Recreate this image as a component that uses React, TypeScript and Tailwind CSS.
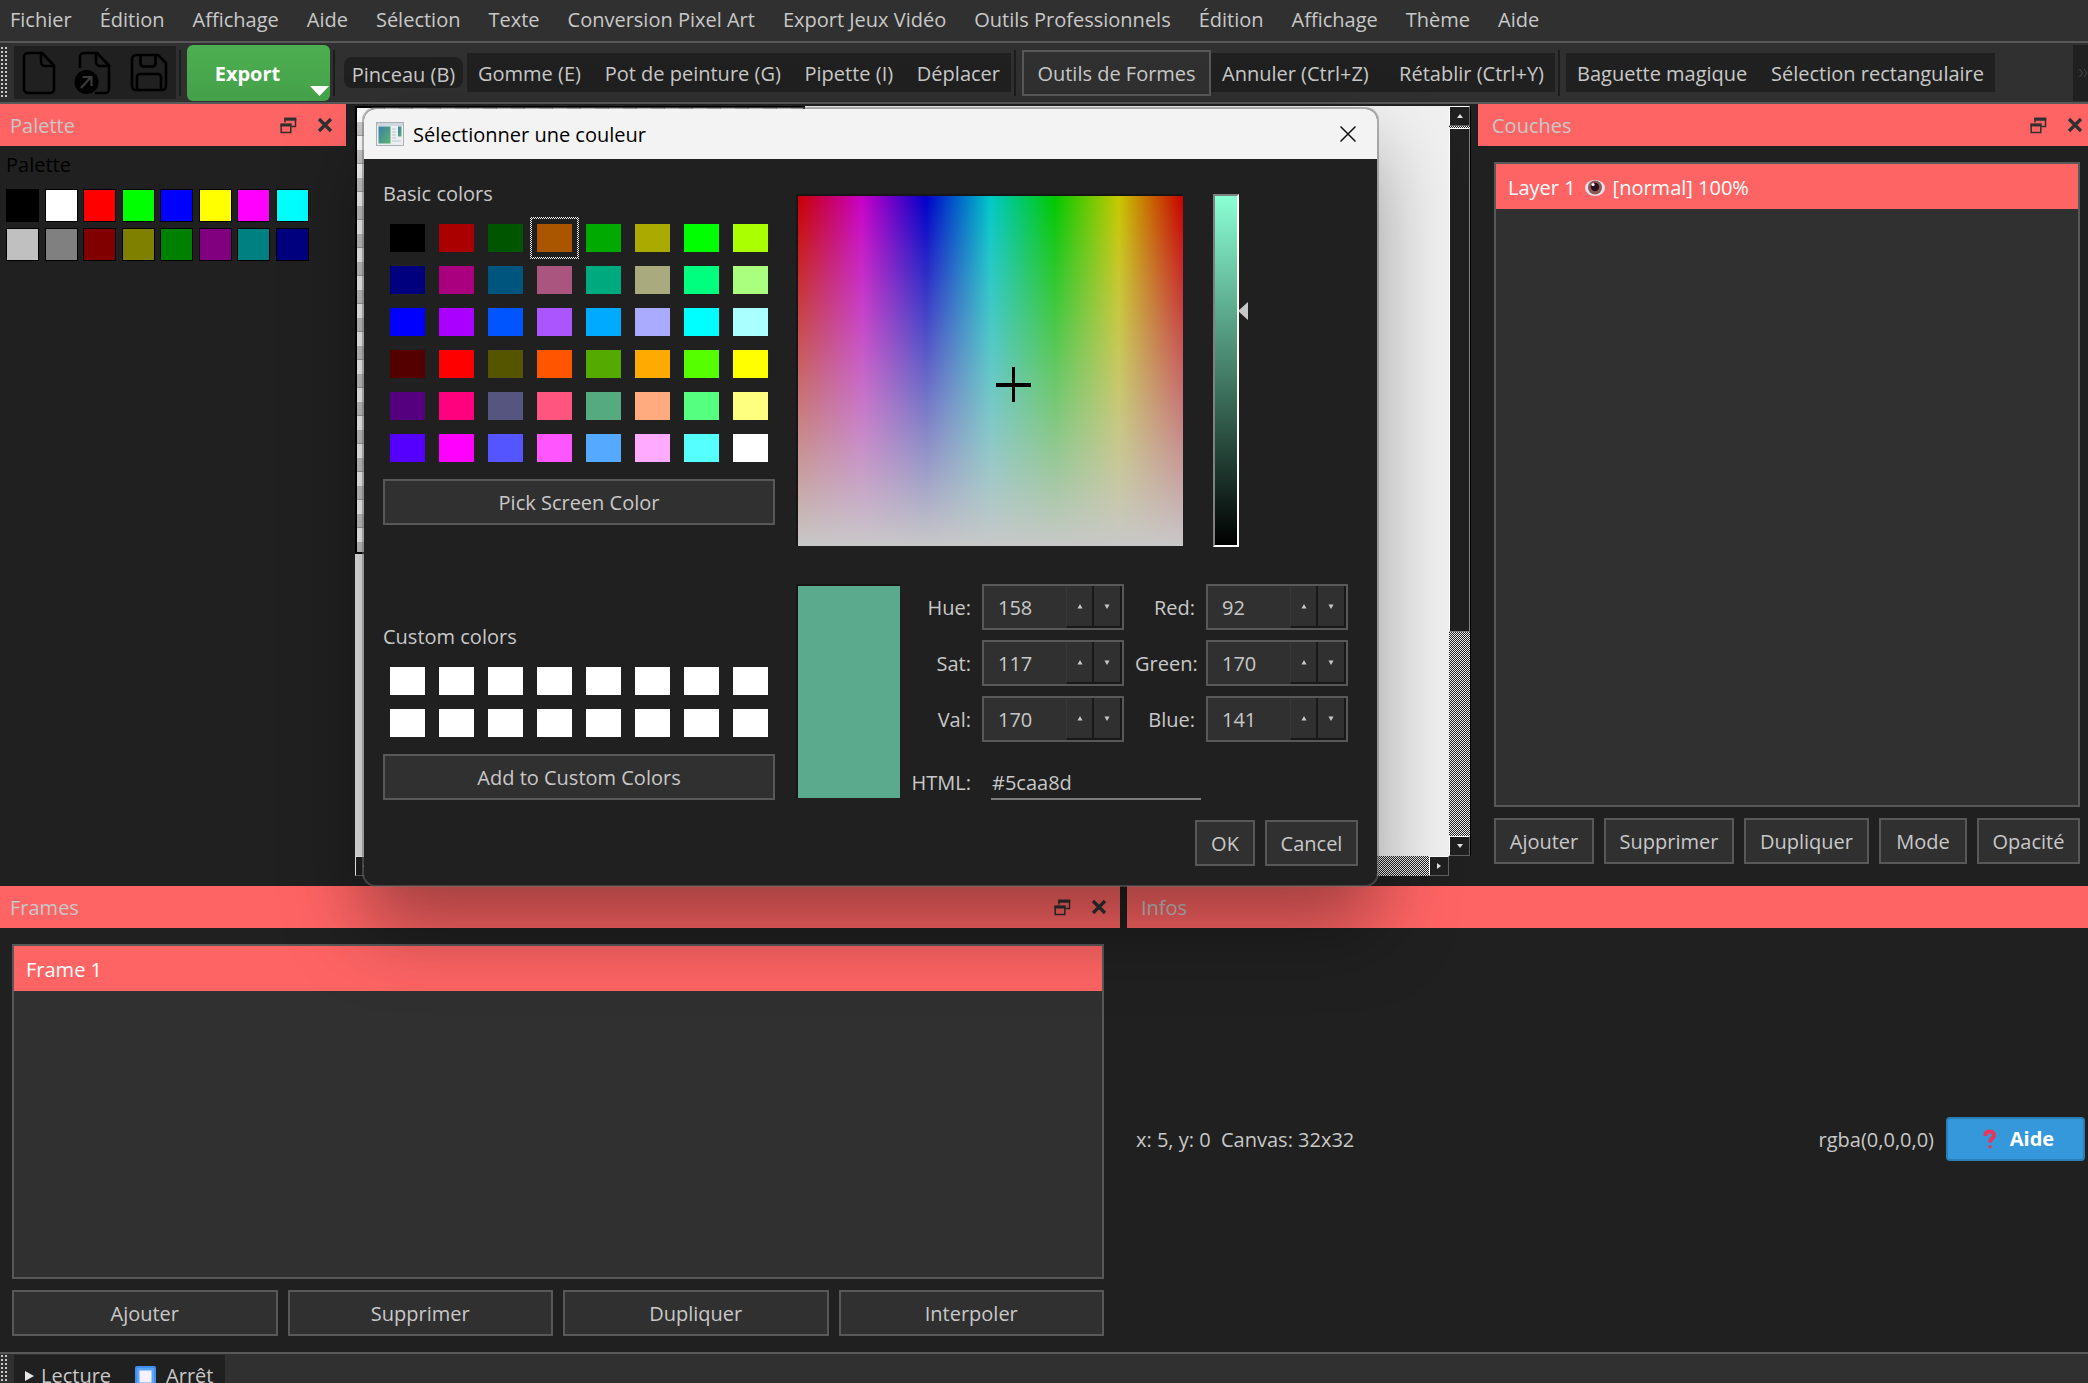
import React, { useState } from "react";

const MENUS = [
  "Fichier",
  "Édition",
  "Affichage",
  "Aide",
  "Sélection",
  "Texte",
  "Conversion Pixel Art",
  "Export Jeux Vidéo",
  "Outils Professionnels",
  "Édition",
  "Affichage",
  "Thème",
  "Aide",
];

const PALETTE = [
  "#000000", "#ffffff", "#ff0000", "#00ff00", "#0000ff", "#ffff00", "#ff00ff", "#00ffff",
  "#c0c0c0", "#808080", "#800000", "#808000", "#008000", "#800080", "#008080", "#000080",
];

const BASIC = [
  "#000000", "#aa0000", "#005500", "#aa5500", "#00aa00", "#aaaa00", "#00ff00", "#aaff00",
  "#00007f", "#aa007f", "#00557f", "#aa557f", "#00aa7f", "#aaaa7f", "#00ff7f", "#aaff7f",
  "#0000ff", "#aa00ff", "#0055ff", "#aa55ff", "#00aaff", "#aaaaff", "#00ffff", "#aaffff",
  "#550000", "#ff0000", "#555500", "#ff5500", "#55aa00", "#ffaa00", "#55ff00", "#ffff00",
  "#55007f", "#ff007f", "#55557f", "#ff557f", "#55aa7f", "#ffaa7f", "#55ff7f", "#ffff7f",
  "#5500ff", "#ff00ff", "#5555ff", "#ff55ff", "#55aaff", "#ffaaff", "#55ffff", "#ffffff",
];

const DITHER = "bg-[repeating-conic-gradient(#f0f0f0_0_25%,#202020_0_50%)] bg-[length:2px_2px]";

function FloatIcon() {
  return (
    <svg width="17" height="17" viewBox="0 0 17 17" fill="none" stroke="#303030" strokeWidth="1.5">
      <path d="M5 5.5V1.5h10.5v8h-4" />
      <path d="M4.3 2.2h11.9" strokeWidth="3" />
      <rect x="1.2" y="7.5" width="9.6" height="8" />
      <path d="M.5 8h11" strokeWidth="3" />
    </svg>
  );
}

function CrossIcon() {
  return (
    <svg width="16" height="16" viewBox="0 0 16 16" fill="none" stroke="#303030" strokeWidth="3.2">
      <path d="M2 2l12 12M14 2L2 14" />
    </svg>
  );
}

function DockTitle({
  title,
  pad = "pl-[10px] pr-[13px]",
  controls = true,
}: {
  title: string;
  pad?: string;
  controls?: boolean;
}) {
  return (
    <header className={`flex h-[42px] shrink-0 items-center bg-[#ff6464] text-[#c8c8c8] ${pad}`}>
      <h2 className="flex-1 pt-[2px]">{title}</h2>
      {controls && (
        <div className="flex items-center gap-5">
          <button type="button" aria-label={`Détacher ${title}`}>
            <FloatIcon />
          </button>
          <button type="button" aria-label={`Fermer ${title}`}>
            <CrossIcon />
          </button>
        </div>
      )}
    </header>
  );
}

function PushButton({ children, className = "" }: { children: React.ReactNode; className?: string }) {
  return (
    <button type="button" className={`h-[46px] border-2 border-[#585858] bg-[#303030] pt-[2px] text-center ${className}`}>
      {children}
    </button>
  );
}

function Handle() {
  return (
    <div className="mt-px ml-px grid h-[52px] w-[6px] shrink-0 grid-cols-2 content-start gap-[2px] overflow-hidden">
      {Array.from({ length: 26 }, (_, i) => (
        <span key={i} className="size-[2px] bg-[#c8c8c8]" />
      ))}
    </div>
  );
}

function Separator() {
  return <div className="mx-[3px] h-[46px] w-[2px] shrink-0 bg-[#1c1c1c]" />;
}

function ToolButton({ label }: { label: string }) {
  return (
    <button type="button" className="h-[39px] px-[11px] pt-[2px] whitespace-nowrap">
      {label}
    </button>
  );
}

function NewIcon() {
  return (
    <svg width="44" height="46" viewBox="0 0 44 46" fill="none" stroke="#000" strokeWidth="2.6" strokeLinejoin="round">
      <path d="M25 3H11a4 4 0 0 0-4 4v32a4 4 0 0 0 4 4h22a4 4 0 0 0 4-4V15.500Z" />
      <path d="M24 3v9a4 4 0 0 0 4 4h9" />
    </svg>
  );
}

function OpenIcon() {
  return (
    <svg width="44" height="46" viewBox="0 0 44 46" fill="none" stroke="#000" strokeWidth="2.600" strokeLinejoin="round">
      <path d="M8 18V7a4 4 0 0 1 4-4h13l12 12.500V39a4 4 0 0 1-4 4h-10" />
      <path d="M24 3v9a4 4 0 0 0 4 4h9" />
      <circle cx="14.500" cy="32" r="12" fill="#000" stroke="none" />
      <path d="M9 38l10-11M10.500 27H19.500v9" stroke="#3a3a3a" strokeWidth="2.200" />
    </svg>
  );
}

function SaveIcon() {
  return (
    <svg width="44" height="46" viewBox="0 0 44 46" fill="none" stroke="#000" strokeWidth="2.6" strokeLinejoin="round">
      <path d="M9 5h22l8 8v23a4 4 0 0 1-4 4H9a4 4 0 0 1-4-4V9a4 4 0 0 1 4-4Z" />
      <path d="M13.500 5v8.500a3 3 0 0 0 3 3h9a3 3 0 0 0 3-3V5" />
      <path d="M10 40V27a3 3 0 0 1 3-3h18a3 3 0 0 1 3 3v13" />
    </svg>
  );
}

function SpinBox({ id, label, value }: { id: string; label: string; value: number }) {
  const [v, setV] = useState(value);
  return (
    <>
      <label htmlFor={id} className="pt-[2px] text-right">
        {label}
      </label>
      <div className="flex h-[46px] w-[142px] border-2 border-[#585858] bg-[#303030]">
        <input
          id={id}
          type="number"
          value={v}
          onChange={(e) => setV(Number(e.target.value))}
          className="min-w-0 flex-1 bg-transparent pt-[2px] pl-[14px] outline-none [appearance:textfield] [&::-webkit-inner-spin-button]:appearance-none"
        />
        <button
          type="button"
          aria-label={`${label} +`}
          onClick={() => setV(v + 1)}
          className="flex w-[28px] items-center justify-center border-r-2 border-b-2 border-l border-r-[#181818] border-b-[#181818] border-l-[#383838]"
        >
          <svg width="6" height="5" viewBox="0 0 6 5" fill="#c8c8c8">
            <path d="M3 0l2.500 4.500H.5z" />
          </svg>
        </button>
        <button
          type="button"
          aria-label={`${label} -`}
          onClick={() => setV(v - 1)}
          className="flex w-[28px] items-center justify-center border-r-2 border-b-2 border-r-[#181818] border-b-[#181818]"
        >
          <svg width="6" height="5" viewBox="0 0 6 5" fill="#c8c8c8">
            <path d="M.5.5h5L3 5z" />
          </svg>
        </button>
      </div>
    </>
  );
}

function Swatches({ colors, name, current }: { colors: string[]; name: string; current?: number }) {
  return (
    <div className="grid w-[392px] auto-rows-[42px] grid-cols-8">
      {colors.map((c, i) => (
        <button
          key={i}
          type="button"
          aria-label={`${name} ${c}`}
          className={i === current ? `p-[2px] ${DITHER}` : "p-[2px]"}
        >
          <span className="flex h-full items-center justify-center bg-[#202020]">
            <span className="h-[28px] w-[35px]" style={{ backgroundColor: c }} />
          </span>
        </button>
      ))}
    </div>
  );
}

function ColorDialog() {
  const [html, setHtml] = useState("#5caa8d");
  const [val, setVal] = useState(170);
  return (
    <section
      role="dialog"
      aria-label="Sélectionner une couleur"
      className="absolute top-[109px] left-[364px] flex h-[776px] w-[1013px] flex-col overflow-hidden rounded-xl bg-[#202020] shadow-[0_0_0_2px_rgba(110,110,110,0.5),0_42px_80px_0_rgba(0,0,0,0.38)]"
    >
      <header className="flex h-[50px] shrink-0 items-center bg-[#f3f3f3] pr-[21px] pl-3 text-black">
        <svg width="28" height="24" viewBox="0 0 28 24" className="mr-[9px]">
          <defs>
            <linearGradient id="win" x1="0" y1="0" x2="1" y2="1">
              <stop offset="0" stopColor="#3a7fa8" />
              <stop offset="1" stopColor="#5db36f" />
            </linearGradient>
          </defs>
          <rect x=".5" y=".5" width="27" height="23" fill="#eceef0" stroke="#a9b0b8" />
          <rect x="1" y="1" width="26" height="3" fill="#cfd6de" />
          <rect x="2.500" y="4.500" width="12" height="17" fill="url(#win)" />
          <rect x="22" y="4.500" width="3.500" height="10" fill="url(#win)" />
          <path d="M16 7h4M16 10h4M16 13h4M16 16h4M16 19h9" stroke="#c2c6ca" />
        </svg>
        <h1 className="flex-1 pt-[2px]">Sélectionner une couleur</h1>
        <button type="button" aria-label="Fermer">
          <svg width="16" height="16" viewBox="0 0 16 16" stroke="#111" strokeWidth="1.500">
            <path d="M.5.5l15 15M15.500.5l-15 15" />
          </svg>
        </button>
      </header>

      <div className="flex flex-1 pl-[19px]">
        <div className="w-[392px]">
          <h2 className="mt-[21px] h-[28px] leading-7">Basic colors</h2>
          <div className="mt-[9px]">
            <Swatches colors={BASIC} name="Basic" current={3} />
          </div>
          <PushButton className="mt-[10px] w-full">Pick Screen Color</PushButton>
          <h2 className="mt-[98px] h-[28px] leading-7">Custom colors</h2>
          <div className="mt-[9px]">
            <Swatches colors={Array(16).fill("#ffffff")} name="Custom" />
          </div>
          <PushButton className="mt-[10px] w-full">Add to Custom Colors</PushButton>
        </div>

        <div className="ml-[21px] flex-1">
          <div className="mt-[35px] flex items-start">
            <div className="border-t-2 border-l-2 border-[#161616]">
              <div className="relative h-[350px] w-[385px] bg-[linear-gradient(to_bottom,rgba(200,200,200,0),rgb(200,200,200)),linear-gradient(to_right,#c80000,#c800c8,#0000c8,#00c8c8,#00c800,#c8c800,#c80000)]">
                <svg width="36" height="36" viewBox="0 0 36 36" stroke="#000" className="absolute top-[171px] left-[197px]">
                  <path d="M18.500 0v35" strokeWidth="3" />
                  <path d="M1 18h35" strokeWidth="4" />
                </svg>
              </div>
            </div>
            <div className="relative ml-[30px]">
              <input
                type="range"
                min="0"
                max="255"
                value={val}
                aria-label="Luminosité"
                onChange={(e) => setVal(Number(e.target.value))}
                className="block h-[353px] w-[26px] appearance-none border-2 border-t-[#808080] border-r-white border-b-white border-l-[#808080] bg-[linear-gradient(to_bottom,#8affd4,#000000)] [direction:rtl] [writing-mode:vertical-lr] [&::-webkit-slider-thumb]:appearance-none [&::-webkit-slider-thumb]:opacity-0"
              />
              <svg
                width="10"
                height="18"
                viewBox="0 0 10 18"
                fill="#c8c8c8"
                className="absolute left-[25px]"
                style={{ top: Math.round(1 + (1 - val / 255) * 349 - 9) }}
              >
                <path d="M10 0v18L0 9z" />
              </svg>
            </div>
          </div>

          <div className="mt-[37px] flex">
            <div className="h-[214px] w-[104px] border-t-2 border-l-2 border-[#161616] bg-[#5caa8d]" />
            <div>
              <div className="grid grid-cols-[71px_142px_60px_142px] items-center gap-x-[11px] gap-y-[10px]">
                <SpinBox id="hue" label="Hue:" value={158} />
                <SpinBox id="red" label="Red:" value={92} />
                <SpinBox id="sat" label="Sat:" value={117} />
                <SpinBox id="green" label="Green:" value={170} />
                <SpinBox id="val" label="Val:" value={170} />
                <SpinBox id="blue" label="Blue:" value={141} />
              </div>
              <div className="mt-[22px] flex items-center gap-5">
                <label htmlFor="html" className="w-[71px] pt-[2px] text-right">
                  HTML:
                </label>
                <input
                  id="html"
                  value={html}
                  onChange={(e) => setHtml(e.target.value)}
                  className="h-[36px] w-[210px] border-b-2 border-[#7c7c7c] bg-transparent px-px pt-[2px] outline-none"
                />
              </div>
            </div>
          </div>

          <div className="mt-5 mr-[19px] flex justify-end gap-[10px]">
            <PushButton className="w-[60px]">OK</PushButton>
            <PushButton className="w-[93px]">Cancel</PushButton>
          </div>
        </div>
      </div>
    </section>
  );
}

function ScrollArrow({ d, label, className }: { d: string; label: string; className: string }) {
  return (
    <button
      type="button"
      aria-label={label}
      className={`flex shrink-0 items-center justify-center border border-t-white border-r-[#606060] border-b-[#606060] border-l-white bg-[#202020] ${className}`}
    >
      <svg width="6" height="6" viewBox="0 0 6 6" fill="#e0e0e0">
        <path d={d} />
      </svg>
    </button>
  );
}

function CanvasArea() {
  return (
    <main className="mt-[2px] mr-[7px] mb-[10px] ml-[9px] flex flex-1 flex-col">
      <div className="flex min-h-0 flex-1">
        <div className="flex-1 bg-[#f0f0f0]">
          <div className="h-[448px] w-[450px] border-2 border-black bg-[linear-gradient(to_bottom,transparent_27px,#a0a0a0_27px),linear-gradient(to_right,transparent_27px,#a0a0a0_27px),repeating-conic-gradient(#cccccc_0_25%,#ffffff_0_50%)] bg-[length:28px_28px]" />
        </div>
        <div className={`flex w-[22px] flex-col border-r border-black ${DITHER}`}>
          <ScrollArrow label="Haut" d="M3 1l3 4H0z" className="h-[20px]" />
          <div className="mt-[2px] h-[504px] border border-t-white border-r-[#808080] border-b-[#808080] border-l-white bg-[#202020]" />
          <div className="flex-1" />
          <ScrollArrow label="Bas" d="M0 1h6L3 5z" className="h-[20px]" />
        </div>
      </div>
      <div className="flex h-[20px]">
        <div className={`flex flex-1 ${DITHER}`}>
          <ScrollArrow label="Gauche" d="M5 0v6L1 3z" className="w-[20px]" />
          <div className="w-[680px] border border-white bg-[#202020]" />
          <div className="flex-1" />
          <ScrollArrow label="Droite" d="M1 0v6l4-3z" className="w-[20px]" />
        </div>
        <div className="w-[22px]" />
      </div>
    </main>
  );
}

function EyeIcon() {
  return (
    <svg width="20" height="18" viewBox="0 0 20 18" className="mr-2 ml-[9px]">
      <ellipse cx="10" cy="9" rx="10" ry="8" fill="#e3dfe9" />
      <circle cx="10" cy="8.500" r="7" fill="#8d5a55" />
      <circle cx="10" cy="8" r="4.200" fill="#2b1220" />
      <circle cx="8" cy="5.500" r="1.600" fill="#fff" />
    </svg>
  );
}

export default function App() {
  return (
    <div className="relative flex h-screen flex-col overflow-hidden bg-[#202020] font-['Open_Sans','Noto_Sans',sans-serif] text-[20px] leading-7 text-[#c8c8c8]">
      <nav className="flex h-[43px] shrink-0 items-center border-b-2 border-[#585858] bg-[#303030] pb-[2px]">
        {MENUS.map((m, i) => (
          <button key={i} type="button" className="pr-[18px] pl-[10px] whitespace-nowrap">
            {m}
          </button>
        ))}
      </nav>

      <div className="flex h-[61px] shrink-0 items-center border-b-2 border-[#585858] bg-[#303030]">
        <Handle />
        <div className="ml-[7px] flex h-[53px] w-[162px] items-center gap-[11px] bg-[#202020] pl-[3px]">
          <button type="button" aria-label="Nouveau">
            <NewIcon />
          </button>
          <button type="button" aria-label="Ouvrir">
            <OpenIcon />
          </button>
          <button type="button" aria-label="Enregistrer">
            <SaveIcon />
          </button>
        </div>
        <Separator />
        <button
          type="button"
          className="relative ml-[3px] h-[56px] w-[143px] rounded-md bg-linear-to-b from-[#4caf50] to-[#45a049] pt-[2px] pr-[22px] font-bold text-white"
        >
          Export
          <svg width="19" height="10" viewBox="0 0 19 10" fill="#fff" className="absolute right-[1px] bottom-[5px]">
            <path d="M0 0h19l-9.500 10z" />
          </svg>
        </button>
        <Separator />
        <button
          type="button"
          className="ml-[6px] h-[31px] w-[119px] rounded-lg bg-[#202020] pt-1 text-center leading-[27px] whitespace-nowrap"
        >
          Pinceau (B)
        </button>
        <div className="ml-1 flex w-[544px] justify-between bg-[#202020]">
          <ToolButton label="Gomme (E)" />
          <ToolButton label="Pot de peinture (G)" />
          <ToolButton label="Pipette (I)" />
          <ToolButton label="Déplacer" />
        </div>
        <Separator />
        <PushButton className="ml-[3px] w-[189px]">Outils de Formes</PushButton>
        <div className="flex w-[344px] justify-between bg-[#202020]">
          <ToolButton label="Annuler (Ctrl+Z)" />
          <ToolButton label="Rétablir (Ctrl+Y)" />
        </div>
        <Separator />
        <div className="ml-[3px] flex w-[429px] justify-between bg-[#202020]">
          <ToolButton label="Baguette magique" />
          <ToolButton label="Sélection rectangulaire" />
        </div>
        <button
          type="button"
          aria-label="Plus d’outils"
          className="ml-auto flex h-[56px] w-[15px] items-center justify-end bg-[#202020]"
        >
          <svg width="9" height="8" viewBox="0 0 9 8" fill="none" stroke="#484848">
            <path d="M.5 0l3 4-3 4M5 0l3 4-3 4" />
          </svg>
        </button>
      </div>

      <div className="flex min-h-0 flex-[782_1_0%]">
        <aside className="w-[346px]">
          <DockTitle title="Palette" />
          <p className="mt-[5px] pl-[6px] text-black">Palette</p>
          <div className="mt-[10px] ml-[6px] grid w-[303px] grid-cols-[repeat(8,33px)] justify-between gap-y-[6px]">
            {PALETTE.map((c) => (
              <button
                key={c}
                type="button"
                aria-label={c}
                className="h-[33px] border border-black"
                style={{ backgroundColor: c }}
              />
            ))}
          </div>
        </aside>

        <CanvasArea />

        <aside className="flex w-[610px] flex-col">
          <DockTitle title="Couches" pad="pl-[14px] pr-[5px]" />
          <ul className="mt-4 mr-2 ml-4 flex-1 border-2 border-[#585858] bg-[#303030]">
            <li className="flex h-[45px] items-center bg-[#ff6464] pt-[2px] pl-3 text-white">
              Layer 1 <EyeIcon /> [normal] 100%
            </li>
          </ul>
          <div className="mt-[11px] mr-2 mb-[22px] ml-4 flex justify-between">
            <PushButton className="w-[100px]">Ajouter</PushButton>
            <PushButton className="w-[130px]">Supprimer</PushButton>
            <PushButton className="w-[125px]">Dupliquer</PushButton>
            <PushButton className="w-[88px]">Mode</PushButton>
            <PushButton className="w-[103px]">Opacité</PushButton>
          </div>
        </aside>
      </div>

      <div className="flex min-h-0 flex-[466_1_0%] gap-[7px]">
        <section className="flex w-[1120px] flex-col">
          <DockTitle title="Frames" />
          <ul className="mt-4 mr-4 ml-3 flex-1 border-2 border-[#585858] bg-[#303030]">
            <li className="flex h-[45px] items-center bg-[#ff6464] pt-[2px] pl-3 text-white">Frame 1</li>
          </ul>
          <div className="mt-[11px] mr-4 mb-4 ml-3 grid grid-cols-4 gap-[10px]">
            <PushButton>Ajouter</PushButton>
            <PushButton>Supprimer</PushButton>
            <PushButton>Dupliquer</PushButton>
            <PushButton>Interpoler</PushButton>
          </div>
        </section>

        <section className="flex flex-1 flex-col">
          <DockTitle title="Infos" pad="pl-[14px]" controls={false} />
          <div className="flex flex-1 items-center pr-[3px] pb-[2px] pl-[9px]">
            <p className="flex-1 pt-[2px] whitespace-pre">x: 5, y: 0  Canvas: 32x32</p>
            <p className="pt-[2px]">rgba(0,0,0,0)</p>
            <button
              type="button"
              className="ml-3 flex h-[44px] w-[139px] items-center justify-center gap-[14px] rounded-sm border-2 border-[#2980b9] bg-[#3498db] pl-[6px] font-bold text-white"
            >
              <svg width="13" height="20" viewBox="0 0 13 20" fill="none" stroke="#e8365a">
                <path d="M2.500 7C2 3.500 4 2.500 6.500 2.500S11 3.800 11 6.200c0 3-4 3.300-4 7.300" strokeWidth="4" />
                <circle cx="6.900" cy="17.800" r="1.800" fill="#e8365a" stroke="none" />
              </svg>
              Aide
            </button>
          </div>
        </section>
      </div>

      <footer className="flex h-[31px] shrink-0 items-start border-t-2 border-[#585858] bg-[#303030]">
        <Handle />
        <div className="mt-px ml-[7px] flex h-[56px] w-[211px] items-start bg-[#202020] pt-[7px] pl-[11px]">
          <button type="button" className="flex items-center gap-[7px]">
            <svg width="9" height="10" viewBox="0 0 9 10" fill="#e8e8e8">
              <path d="M0 0v10l9-5z" />
            </svg>
            Lecture
          </button>
          <button type="button" className="ml-6 flex items-center gap-[10px]">
            <svg width="21" height="21" viewBox="0 0 21 21">
              <rect width="21" height="21" rx="2" fill="#3f8ff0" />
              <rect x="2" y="2" width="17" height="17" rx="1" fill="#5aa5fa" />
              <rect x="4.500" y="4.500" width="12" height="12" fill="#f7f1fd" />
            </svg>
            Arrêt
          </button>
        </div>
      </footer>

      <ColorDialog />
    </div>
  );
}
